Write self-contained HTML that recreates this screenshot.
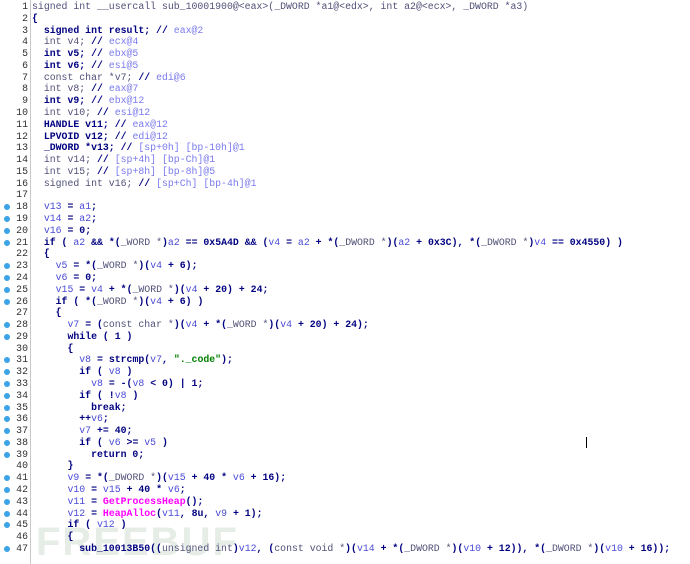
<!DOCTYPE html>
<html><head><meta charset="utf-8"><style>
html,body{margin:0;padding:0;background:#fff;width:690px;height:564px;overflow:hidden}
body{position:relative;font-family:"Liberation Mono",monospace;font-size:9.85px}
.gut{position:absolute;left:30px;top:0;width:1px;height:564px;background:#c8c8c8}
.ln{position:absolute;left:0;width:28px;text-align:right;color:#303030;white-space:pre;line-height:11.78px}
.dot{position:absolute;left:4px;width:6px;height:6px;border-radius:50%;background:#3ba3e6}
.code{position:absolute;left:32px;top:1px;white-space:pre;line-height:11.78px;color:#000080;font-weight:bold}
.v{color:#4a4ad6;font-weight:normal}
.g{color:#505078;font-weight:normal}
.c{color:#7a7aee;font-weight:normal}
.s{color:#008000}
.f{color:#ff00ff}
.wm{position:absolute;left:36px;top:520px;font:bold 40px "Liberation Sans",sans-serif;color:#e6ece6;letter-spacing:2px}
.cur{position:absolute;left:586px;top:437px;width:1px;height:11px;background:#000}
</style></head><body>
<div class="wm">FREEBUF</div>
<div class="gut"></div>
<div class="cur"></div>
<div id="nums"></div>
<div class="code"><span class="g">signed int __usercall sub_10001900@&lt;eax&gt;(_DWORD *a1@&lt;edx&gt;, int a2@&lt;ecx&gt;, _DWORD *a3)</span>
{
  signed int result; // <span class="c">eax@2</span>
  <span class="g">int v4;</span> // <span class="c">ecx@4</span>
  int v5; // <span class="c">ebx@5</span>
  int v6; // <span class="c">esi@5</span>
  <span class="g">const char *v7;</span> // <span class="c">edi@6</span>
  <span class="g">int v8;</span> // <span class="c">eax@7</span>
  int v9; // <span class="c">ebx@12</span>
  <span class="g">int v10;</span> // <span class="c">esi@12</span>
  HANDLE v11; // <span class="c">eax@12</span>
  LPVOID v12; // <span class="c">edi@12</span>
  _DWORD *v13; // <span class="c">[sp+0h] [bp-10h]@1</span>
  <span class="g">int v14;</span> // <span class="c">[sp+4h] [bp-Ch]@1</span>
  <span class="g">int v15;</span> // <span class="c">[sp+8h] [bp-8h]@5</span>
  <span class="g">signed int v16;</span> // <span class="c">[sp+Ch] [bp-4h]@1</span>

  <span class="v">v13</span> = <span class="v">a1</span>;
  <span class="v">v14</span> = <span class="v">a2</span>;
  <span class="v">v16</span> = 0;
  if ( <span class="v">a2</span> &amp;&amp; *(<span class="g">_WORD *</span>)<span class="v">a2</span> == 0x5A4D &amp;&amp; (<span class="v">v4</span> = <span class="v">a2</span> + *(<span class="g">_DWORD *</span>)(<span class="v">a2</span> + 0x3C), *(<span class="g">_DWORD *</span>)<span class="v">v4</span> == 0x4550) )
  {
    <span class="v">v5</span> = *(<span class="g">_WORD *</span>)(<span class="v">v4</span> + 6);
    <span class="v">v6</span> = 0;
    <span class="v">v15</span> = <span class="v">v4</span> + *(<span class="g">_WORD *</span>)(<span class="v">v4</span> + 20) + 24;
    if ( *(<span class="g">_WORD *</span>)(<span class="v">v4</span> + 6) )
    {
      <span class="v">v7</span> = (<span class="g">const char *</span>)(<span class="v">v4</span> + *(<span class="g">_WORD *</span>)(<span class="v">v4</span> + 20) + 24);
      while ( 1 )
      {
        <span class="v">v8</span> = strcmp(<span class="v">v7</span>, <span class="s">"._code"</span>);
        if ( <span class="v">v8</span> )
          <span class="v">v8</span> = -(<span class="v">v8</span> &lt; 0) | 1;
        if ( !<span class="v">v8</span> )
          break;
        ++<span class="v">v6</span>;
        <span class="v">v7</span> += 40;
        if ( <span class="v">v6</span> &gt;= <span class="v">v5</span> )
          return 0;
      }
      <span class="v">v9</span> = *(<span class="g">_DWORD *</span>)(<span class="v">v15</span> + 40 * <span class="v">v6</span> + 16);
      <span class="v">v10</span> = <span class="v">v15</span> + 40 * <span class="v">v6</span>;
      <span class="v">v11</span> = <span class="f">GetProcessHeap</span>();
      <span class="v">v12</span> = <span class="f">HeapAlloc</span>(<span class="v">v11</span>, 8u, <span class="v">v9</span> + 1);
      if ( <span class="v">v12</span> )
      {
        sub_10013B50((<span class="g">unsigned int</span>)<span class="v">v12</span>, (<span class="g">const void *</span>)(<span class="v">v14</span> + *(<span class="g">_DWORD *</span>)(<span class="v">v10</span> + 12)), *(<span class="g">_DWORD *</span>)(<span class="v">v10</span> + 16));</div>
<script>
var dots=[18,19,20,21,23,24,25,26,28,29,31,32,33,34,35,36,37,38,39,41,42,43,44,45,47];
var h='';
for(var i=1;i<=47;i++){var t=1+(i-1)*11.78;h+='<div class="ln" style="top:'+t+'px">'+i+'</div>';
if(dots.indexOf(i)>=0)h+='<div class="dot" style="top:'+(t+3)+'px"></div>';}
document.getElementById('nums').innerHTML=h;
</script>
</body></html>
